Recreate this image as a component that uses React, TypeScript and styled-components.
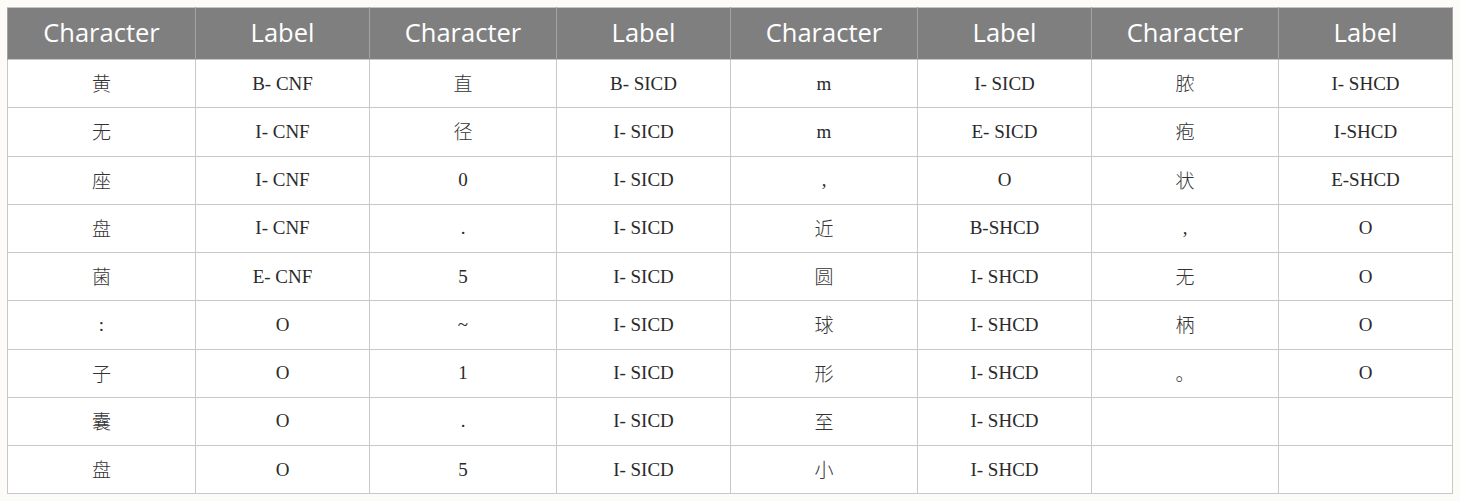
import React from "react";
import styled, { createGlobalStyle } from "styled-components";

const GlobalStyle = createGlobalStyle`
  html, body { margin: 0; padding: 0; background: #fcfbf7; }
  body { font-family: "Liberation Serif", "Noto Sans CJK SC", serif; }
`;

const Page = styled.div`
  padding: 7px 8px 7px 7px;
`;

const Table = styled.table`
  width: 1445px;
  border-collapse: collapse;
  table-layout: fixed;
  background: #ffffff;
  border: 1px solid #c4c4c4;
`;

const HeadCell = styled.th`
  height: 48px;
  padding: 0 0 3px 0;
  background: #7f7f7f;
  color: #ffffff;
  font-family: "Open Sans", "Noto Sans", sans-serif;
  font-weight: 400;
  font-size: 25.5px;
  text-align: center;
  vertical-align: middle;
  border-left: 1px solid #a3a3a3;
  border-right: 1px solid #a3a3a3;
  border-top: 1px solid #c4c4c4;
`;

const Row = styled.tr`
  height: 48.25px;
`;

const Cell = styled.td`
  padding: 0;
  text-align: center;
  vertical-align: middle;
  color: #2a2a2a;
  font-family: "Liberation Serif", "Noto Sans CJK SC", serif;
  font-size: 19px;
  border: 1px solid #c8c8c8;
`;

const Han = styled.span`
  font-family: "Noto Sans CJK SC", sans-serif;
  font-weight: 300;
  font-size: 19px;
  color: #333333;
  vertical-align: 2px;
`;

const widths = [188, 174, 187, 174, 187, 174, 187, 174];

const rows: string[][] = [
  ["黄", "B- CNF", "直", "B- SICD", "m", "I- SICD", "脓", "I- SHCD"],
  ["无", "I- CNF", "径", "I- SICD", "m", "E- SICD", "疱", "I-SHCD"],
  ["座", "I- CNF", "0", "I- SICD", ",", "O", "状", "E-SHCD"],
  ["盘", "I- CNF", ".", "I- SICD", "近", "B-SHCD", ",", "O"],
  ["菌", "E- CNF", "5", "I- SICD", "圆", "I- SHCD", "无", "O"],
  [":", "O", "~", "I- SICD", "球", "I- SHCD", "柄", "O"],
  ["子", "O", "1", "I- SICD", "形", "I- SHCD", "。", "O"],
  ["囊", "O", ".", "I- SICD", "至", "I- SHCD", "", ""],
  ["盘", "O", "5", "I- SICD", "小", "I- SHCD", "", ""],
];

const isHan = (s: string) => /[\u3000-\u303f\u4e00-\u9fff]/.test(s);

export default function App() {
  return (
    <>
      <GlobalStyle />
      <Page>
        <Table>
          <colgroup>
            {widths.map((w, i) => (
              <col key={i} style={{ width: w }} />
            ))}
          </colgroup>
          <thead>
            <tr>
              {widths.map((_, i) => (
                <HeadCell key={i}>{i % 2 === 0 ? "Character" : "Label"}</HeadCell>
              ))}
            </tr>
          </thead>
          <tbody>
            {rows.map((r, ri) => (
              <Row key={ri}>
                {r.map((c, ci) => (
                  <Cell key={ci}>{isHan(c) ? <Han>{c}</Han> : c}</Cell>
                ))}
              </Row>
            ))}
          </tbody>
        </Table>
      </Page>
    </>
  );
}
